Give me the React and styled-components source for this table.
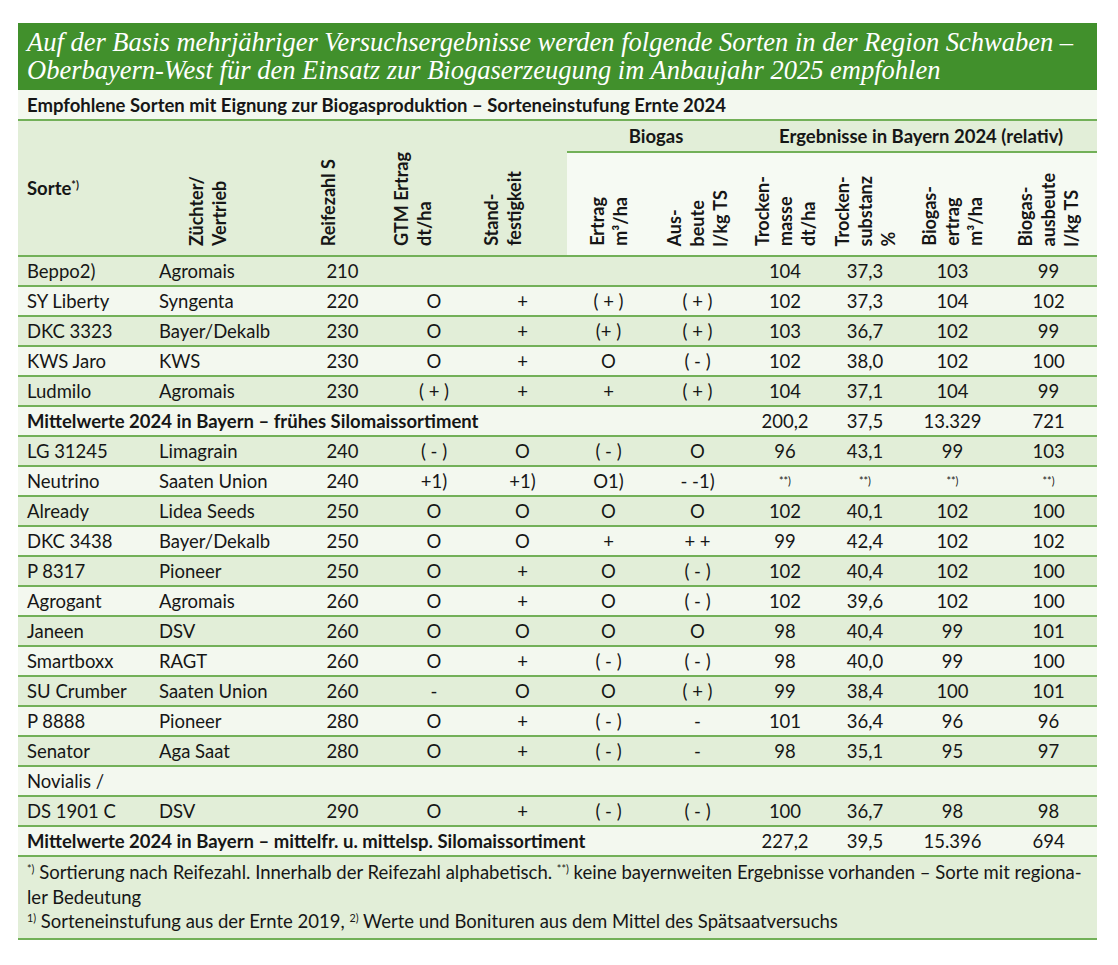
import React from 'react';
import styled, { createGlobalStyle } from 'styled-components';

const GlobalStyle = createGlobalStyle`
  html, body {
    margin: 0;
    padding: 0;
    background: #ffffff;
  }
  body {
    padding: 23px 21px 0 18px;
    font-family: Lato, "Liberation Sans", sans-serif;
    color: #161616;
  }
`;

const Sheet = styled.div`
  width: 1079px;
`;

const TitleBar = styled.div`
  background: #41902c;
  color: #ffffff;
  font-family: "Liberation Serif", serif;
  font-style: italic;
  font-size: 26.5px;
  line-height: 28px;
  padding: 5px 9px 6px;
`;

const Table = styled.table`
  width: 1079px;
  border-collapse: collapse;
  table-layout: fixed;
  font-size: 18.5px;
`;

const Col = styled.col`
  width: ${p => p.$w}px;
`;

const SubtitleCell = styled.td`
  background: #f3f8ef;
  font-weight: 700;
  height: 29px;
  padding: 0 9px;
  border-bottom: 2px solid #72b058;
`;

const HeadRow = styled.tr`
  background: ${p => (p.$light ? '#f6faf3' : '#e2eed8')};
  border-bottom: 2px solid #72b058;
`;

const GroupCell = styled.th`
  background: #e2eed8;
  height: 30px;
  font-weight: 700;
  text-align: center;
  vertical-align: middle;
  padding: 0;
  border-bottom: 2px solid #72b058;
`;

const SortHead = styled.th`
  background: #e2eed8;
  text-align: left;
  vertical-align: middle;
  font-weight: 700;
  padding: 0 9px;
`;

const RotHead = styled.th`
  background: ${p => (p.$light ? '#f6faf3' : '#e2eed8')};
  height: ${p => p.$h || 97}px;
  vertical-align: bottom;
  text-align: center;
  padding: 0 ${p => p.$pr || 0}px 5px 0;
  font-weight: 700;
  font-size: 18px;
`;

const Rotated = styled.span`
  display: inline-block;
  writing-mode: vertical-rl;
  transform: rotate(180deg);
  text-align: start;
  line-height: 23px;
  white-space: nowrap;
`;

const Row = styled.tr`
  background: ${p => (p.$alt ? '#f3f8ef' : '#e2eed8')};
  border-bottom: 2px solid #72b058;
`;

const Cell = styled.td`
  height: 28px;
  padding: 0 ${p => (p.$left ? 9 : 0)}px;
  text-align: ${p => (p.$left ? 'left' : 'center')};
  font-weight: ${p => (p.$bold ? 700 : 400)};
  white-space: nowrap;
  overflow: visible;
  vertical-align: middle;
`;

const Sup = styled.sup`
  font-size: 0.58em;
  line-height: 0;
  vertical-align: ${p => p.$raise || '0.55em'};
`;

const NoteCell = styled.td`
  background: #e2eed8;
  border-bottom: 2px solid #72b058;
  padding: 3px 9px 4px;
  font-size: 18.5px;
  line-height: 24.5px;
`;

const widths = [132, 145, 95, 88, 89, 83, 95, 80, 80, 95, 97];

const NA = <Sup $raise="0.3em">**)</Sup>;

const rows = [
  ['Beppo2)', 'Agromais', '210', '', '', '', '', '104', '37,3', '103', '99'],
  ['SY Liberty', 'Syngenta', '220', 'O', '+', '( + )', '( + )', '102', '37,3', '104', '102'],
  ['DKC 3323', 'Bayer/Dekalb', '230', 'O', '+', '(+ )', '( + )', '103', '36,7', '102', '99'],
  ['KWS Jaro', 'KWS', '230', 'O', '+', 'O', '( - )', '102', '38,0', '102', '100'],
  ['Ludmilo', 'Agromais', '230', '( + )', '+', '+', '( + )', '104', '37,1', '104', '99'],
  { mean: 'Mittelwerte 2024 in Bayern – frühes Silomaissortiment', values: ['200,2', '37,5', '13.329', '721'] },
  ['LG 31245', 'Limagrain', '240', '( - )', 'O', '( - )', 'O', '96', '43,1', '99', '103'],
  ['Neutrino', 'Saaten Union', '240', '+1)', '+1)', 'O1)', '- -1)', NA, NA, NA, NA],
  ['Already', 'Lidea Seeds', '250', 'O', 'O', 'O', 'O', '102', '40,1', '102', '100'],
  ['DKC 3438', 'Bayer/Dekalb', '250', 'O', 'O', '+', '+ +', '99', '42,4', '102', '102'],
  ['P 8317', 'Pioneer', '250', 'O', '+', 'O', '( - )', '102', '40,4', '102', '100'],
  ['Agrogant', 'Agromais', '260', 'O', '+', 'O', '( - )', '102', '39,6', '102', '100'],
  ['Janeen', 'DSV', '260', 'O', 'O', 'O', 'O', '98', '40,4', '99', '101'],
  ['Smartboxx', 'RAGT', '260', 'O', '+', '( - )', '( - )', '98', '40,0', '99', '100'],
  ['SU Crumber', 'Saaten Union', '260', '-', 'O', 'O', '( + )', '99', '38,4', '100', '101'],
  ['P 8888', 'Pioneer', '280', 'O', '+', '( - )', '-', '101', '36,4', '96', '96'],
  ['Senator', 'Aga Saat', '280', 'O', '+', '( - )', '-', '98', '35,1', '95', '97'],
  ['Novialis /', '', '', '', '', '', '', '', '', '', ''],
  ['DS 1901 C', 'DSV', '290', 'O', '+', '( - )', '( - )', '100', '36,7', '98', '98'],
  { mean: 'Mittelwerte 2024 in Bayern – mittelfr. u. mittelsp. Silomaissortiment', values: ['227,2', '39,5', '15.396', '694'] },
];

export default function App() {
  return (
    <Sheet>
      <GlobalStyle />
      <TitleBar>
        Auf der Basis mehrjähriger Versuchsergebnisse werden folgende Sorten in der Region Schwaben –
        <br />
        Oberbayern-West für den Einsatz zur Biogaserzeugung im Anbaujahr 2025 empfohlen
      </TitleBar>
      <Table>
        <colgroup>
          {widths.map((w, i) => (
            <Col key={i} $w={w} />
          ))}
        </colgroup>
        <thead>
          <tr>
            <SubtitleCell colSpan={11}>
              Empfohlene Sorten mit Eignung zur Biogasproduktion – Sorteneinstufung Ernte 2024
            </SubtitleCell>
          </tr>
          <tr>
            <SortHead rowSpan={2}>
              Sorte<Sup>*)</Sup>
            </SortHead>
            <RotHead rowSpan={2} $pr={30}>
              <Rotated>Züchter/<br />Vertrieb</Rotated>
            </RotHead>
            <RotHead rowSpan={2} $pr={28}>
              <Rotated>Reifezahl S</Rotated>
            </RotHead>
            <RotHead rowSpan={2} $pr={42}>
              <Rotated>GTM Ertrag<br />dt/ha</Rotated>
            </RotHead>
            <RotHead rowSpan={2} $pr={40}>
              <Rotated>Stand-<br />festigkeit</Rotated>
            </RotHead>
            <GroupCell colSpan={2}>Biogas</GroupCell>
            <GroupCell colSpan={4}>Ergebnisse in Bayern 2024 (relativ)</GroupCell>
          </tr>
          <HeadRow $light>
            <RotHead $light>
              <Rotated>Ertrag<br />m³/ha</Rotated>
            </RotHead>
            <RotHead $light>
              <Rotated>Aus-<br />beute<br />l/kg TS</Rotated>
            </RotHead>
            <RotHead $light>
              <Rotated>Trocken-<br />masse<br />dt/ha</Rotated>
            </RotHead>
            <RotHead $light>
              <Rotated>Trocken-<br />substanz<br />%</Rotated>
            </RotHead>
            <RotHead $light>
              <Rotated>Biogas-<br />ertrag<br />m³/ha</Rotated>
            </RotHead>
            <RotHead $light>
              <Rotated>Biogas-<br />ausbeute<br />l/kg TS</Rotated>
            </RotHead>
          </HeadRow>
        </thead>
        <tbody>
          {rows.map((r, i) =>
            r.mean ? (
              <Row key={i} $alt={i % 2 === 1}>
                <Cell colSpan={7} $left $bold>{r.mean}</Cell>
                {r.values.map((v, j) => (
                  <Cell key={j}>{v}</Cell>
                ))}
              </Row>
            ) : (
              <Row key={i} $alt={i % 2 === 1}>
                {r.map((v, j) => (
                  <Cell key={j} $left={j < 2}>{v}</Cell>
                ))}
              </Row>
            )
          )}
          <tr>
            <NoteCell colSpan={11}>
              <Sup>*)</Sup> Sortierung nach Reifezahl. Innerhalb der Reifezahl alphabetisch. <Sup>**)</Sup> keine bayernweiten Ergebnisse vorhanden – Sorte mit regiona-
              <br />
              ler Bedeutung
              <br />
              <Sup>1)</Sup> Sorteneinstufung aus der Ernte 2019, <Sup>2)</Sup> Werte und Bonituren aus dem Mittel des Spätsaatversuchs
            </NoteCell>
          </tr>
        </tbody>
      </Table>
    </Sheet>
  );
}
